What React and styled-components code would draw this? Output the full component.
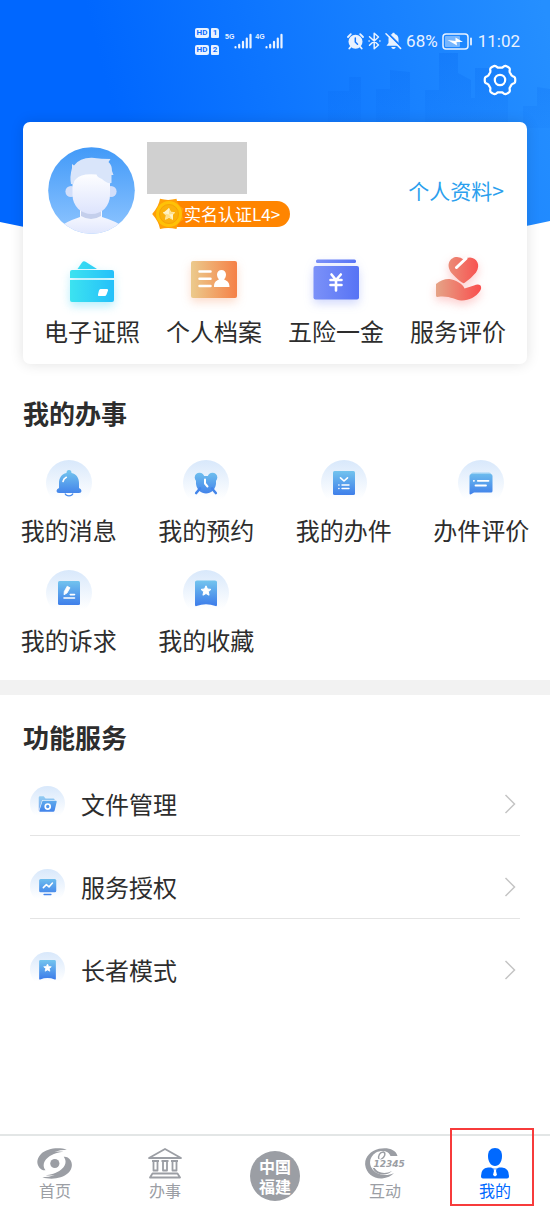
import React from "react";
import styled, { createGlobalStyle } from "styled-components";

const GlobalStyle = createGlobalStyle`
  *, *::before, *::after { box-sizing: border-box; }
  body {
    margin: 0;
    background: #fff;
    color: #2d2d2d;
    font-family: "Noto Sans CJK SC", "Noto Sans", sans-serif;
  }
  a { color: inherit; text-decoration: none; }
  button { border: 0; padding: 0; background: none; font: inherit; cursor: pointer; }
  svg { display: block; flex: none; }
`;

const Page = styled.div`
  display: flex;
  flex-direction: column;
  min-height: 100vh;
`;

/* ---------- header ---------- */

const Header = styled.header`
  position: relative;
`;

const Backdrop = styled.svg`
  position: absolute;
  inset: 0;
  width: 100%;
  height: 252px;
  z-index: -1;
`;

const StatusBar = styled.div`
  display: flex;
  align-items: center;
  height: 62px;
  padding: 20px 30px 0 195px;
  color: #e9f2ff;
`;

const SimStack = styled.div`
  display: grid;
  grid-template-columns: auto auto;
  gap: 7px 2px;
  margin-right: 6px;
`;

const Chip = styled.span`
  width: ${(p) => (p.$narrow ? "8px" : "14px")};
  height: 10px;
  border-radius: ${(p) => (p.$narrow ? "1px 3px 1px 1px" : "2px")};
  background: #e9f2ff;
  color: #0b6cff;
  font: 700 8px/10px Roboto, sans-serif;
  text-align: center;
`;

const Network = styled.span`
  display: flex;
  align-items: flex-start;
  margin-right: 3px;
  font: 700 7px/8px "Liberation Sans", sans-serif;
`;

const StatusRight = styled.div`
  display: flex;
  align-items: center;
  gap: 4px;
  margin-left: auto;
  font: 400 17px/22px Roboto, sans-serif;
`;

const Toolbar = styled.div`
  display: flex;
  justify-content: flex-end;
  padding: 0 32px 24px;
`;

const IconButton = styled.button`
  display: grid;
  place-items: center;
  width: 36px;
  height: 36px;
`;

/* ---------- profile card ---------- */

const Card = styled.section`
  margin: 0 23px;
  padding: 20px 8px 18px;
  border-radius: 7px;
  background: #fff;
  box-shadow: 0 0 14px rgba(0, 0, 0, 0.12);
`;

const Profile = styled.div`
  display: flex;
  align-items: center;
  height: 96px;
  padding: 0 15px 0 17px;
`;

const Info = styled.div`
  align-self: flex-start;
  margin-left: 12px;
`;

const HiddenName = styled.div`
  width: 100px;
  height: 52px;
  margin-bottom: 4px;
  background: #d0d0d0;
`;

const Verified = styled.a`
  display: flex;
  align-items: center;
  padding-left: 5px;
  color: #fff;
  svg { position: relative; }
`;

const Pill = styled.span`
  margin-left: -16px;
  padding: 0 10px 0 16px;
  border-radius: 0 13px 13px 0;
  background: #ff8500;
  font-size: 17px;
  line-height: 26px;
`;

const ProfileLink = styled.a`
  margin-left: auto;
  color: #2b9fee;
  font-size: 21px;
  line-height: 32px;
`;

const QuickGrid = styled.div`
  display: grid;
  grid-template-columns: repeat(4, 1fr);
  margin-top: 19px;
`;

const Tile = styled.a`
  display: flex;
  flex-direction: column;
  align-items: center;
  gap: ${(p) => p.$gap}px;
  font-size: 24px;
  line-height: 30px;
  white-space: nowrap;
`;

/* ---------- sections ---------- */

const Section = styled.section`
  padding-top: ${(p) => p.$top}px;
`;

const Title = styled.h2`
  margin: 0 23px;
  font-size: 26px;
  font-weight: 700;
  line-height: 28px;
`;

const TaskGrid = styled.div`
  display: grid;
  grid-template-columns: repeat(4, 1fr);
  row-gap: 25px;
  padding: 33px 0 25px;
`;

const Band = styled.div`
  height: 15px;
  background: #f2f2f2;
`;

const List = styled.ul`
  margin: 2px 30px 0;
  padding: 0;
  list-style: none;
`;

const Item = styled.li`
  border-bottom: 1px solid #e4e4e4;
  &:last-child { border-bottom: 0; }
`;

const ItemLink = styled.a`
  display: flex;
  align-items: center;
  gap: 16px;
  padding: 33px 4px 14px 0;
  font-size: 24px;
  line-height: 34px;
  svg:last-child { margin-left: auto; }
`;

/* ---------- tab bar ---------- */

const TabBar = styled.nav`
  display: grid;
  grid-template-columns: repeat(5, 1fr);
  height: 76px;
  margin-top: auto;
  border-top: 2px solid #e3e6e6;
`;

const Tab = styled.a`
  position: relative;
  display: flex;
  flex-direction: column;
  align-items: center;
  gap: 1px;
  padding-top: 12px;
  color: ${(p) => (p.$active ? "#0069ff" : "#9b9ea4")};
  font-size: 16px;
  line-height: 20px;
`;

const Seal = styled.span`
  height: 50px;
  width: 50px;
  margin-top: 3px;
  padding: 5px 9px;
  border-radius: 50%;
  background: #9b9ea4;
  color: #fff;
  font-size: 16px;
  font-weight: 700;
  line-height: 20px;
`;

const Frame = styled.span`
  position: absolute;
  inset: -8px 16px 4px 10px;
  border: 2px solid #f73b3b;
`;

/* ---------- drawings ---------- */

const polar = (cx, cy, r, deg) => {
  const a = (deg * Math.PI) / 180;
  return `${(cx + r * Math.cos(a)).toFixed(2)} ${(cy + r * Math.sin(a)).toFixed(2)}`;
};

const gearPath = (cx, cy, r, depth) => {
  const pts = [];
  for (let d = 0; d < 360; d += 3) {
    const wave = Math.tanh(2.2 * Math.cos((6 * d * Math.PI) / 180));
    pts.push(polar(cx, cy, r + depth * wave, d));
  }
  return `M${pts.join("L")}Z`;
};

const starPath = (cx, cy, r) => {
  const pts = [];
  for (let i = 0; i < 10; i++) pts.push(polar(cx, cy, i % 2 ? r * 0.48 : r, i * 36 - 90));
  return `M${pts.join("L")}Z`;
};

const Skyline = () => (
  <Backdrop viewBox="0 0 550 252" preserveAspectRatio="none" aria-hidden="true">
    <defs>
      <linearGradient id="sky" gradientUnits="userSpaceOnUse" x1="120" y1="140" x2="550" y2="30">
        <stop offset="0" stopColor="#0067ff" />
        <stop offset="1" stopColor="#258fff" />
      </linearGradient>
      <linearGradient id="city" gradientUnits="userSpaceOnUse" x1="0" y1="50" x2="0" y2="128">
        <stop offset="0" stopColor="#0668f0" stopOpacity=".3" />
        <stop offset="1" stopColor="#0668f0" stopOpacity=".08" />
      </linearGradient>
    </defs>
    <path d="M0 0H550V221Q275 282 0 222Z" fill="url(#sky)" />
    <path
      d="M328 128V91H349V77H361V128ZM376 128V89H390V70L410 72V128ZM425 128V90H439V53H458V73L471 80V98H475V68H508V128ZM523 128V106H537V87L550 89V128Z"
      fill="url(#city)"
    />
  </Backdrop>
);

const Signal = () => (
  <svg width="18" height="16" viewBox="0 0 18 16" stroke="currentColor" strokeWidth="2.2" strokeLinecap="round">
    <path d="M1.5 14.2v.2M5.200 14.4v-2.500M9 14.400v-5.500M12.800 14.400V5.500M16.500 14.400V1.800" />
  </svg>
);

const AlarmStatus = () => (
  <svg width="17" height="17" viewBox="0 0 17 17" fill="none" stroke="currentColor" strokeWidth="1.800" strokeLinecap="round">
    <circle cx="8.500" cy="8.700" r="7" fill="currentColor" stroke="none" />
    <path d="M1 4L3.800 1.200M16 4L13.200 1.200M3.500 14L2.300 15.500M13.500 14L14.700 15.500" />
    <path d="M8.300 5V9L10.500 11.300" stroke="#1678ff" strokeWidth="1.500" />
  </svg>
);

const Bluetooth = () => (
  <svg width="13" height="18" viewBox="0 0 13 18" fill="none" stroke="currentColor" strokeWidth="1.500" strokeLinejoin="round" strokeLinecap="round">
    <path d="M1.500 4.800L10.500 13L6.200 16.800V1.200L10.500 5L1.500 13.200" />
    <path d="M1 9h.2M11.800 9h.2" />
  </svg>
);

const BellOff = () => (
  <svg width="17" height="18" viewBox="0 0 17 18" fill="currentColor">
    <path d="M8.500 .8c.9 0 1.300.5 1.300 1.300 2.500.7 3.700 2.600 3.700 5V11l2 2.800H1.500L3.500 11V7c0-2.400 1.200-4.300 3.700-5 0-.7.400-1.200 1.300-1.200ZM6.300 15h4.400c-.3 2.600-4.100 2.600-4.400 0Z" />
    <path d="M2.500 1L17 15.500" stroke="#1a7dff" strokeWidth="2" />
    <path d="M1 1.800L15.600 16.400" stroke="currentColor" strokeWidth="1.500" strokeLinecap="round" />
  </svg>
);

const Battery = () => (
  <svg width="32" height="17" viewBox="0 0 32 17" fill="none">
    <rect x="1" y="1" width="25" height="15" rx="3" stroke="currentColor" strokeWidth="1.500" />
    <rect x="3" y="3" width="15" height="11" rx="1" fill="#fff" opacity=".4" />
    <path d="M5.500 7L13.500 8V4.500L21 9H14.500L15 12.500Z" fill="#fff" />
    <path d="M29 5.500v6" stroke="currentColor" strokeWidth="1.800" strokeLinecap="round" />
  </svg>
);

const Avatar = () => (
  <svg width="87" height="87" viewBox="0 0 87 87" role="img" aria-label="头像">
    <defs>
      <linearGradient id="avBg" x1="0" y1="0" x2="0" y2="1">
        <stop offset="0" stopColor="#429af8" />
        <stop offset="1" stopColor="#8fc5ff" />
      </linearGradient>
      <linearGradient id="avFace" x1="0" y1="0" x2="0" y2="1">
        <stop offset="0" stopColor="#fff" />
        <stop offset="1" stopColor="#dde4fd" />
      </linearGradient>
      <clipPath id="avClip"><circle cx="43.500" cy="43.500" r="43.300" /></clipPath>
    </defs>
    <g clipPath="url(#avClip)">
      <rect width="87" height="87" fill="url(#avBg)" />
      <path d="M10 81Q17 75 32 70V60H54V70Q68 74 77 81V90H10Z" fill="url(#avFace)" />
      <path d="M33 62H53V69Q43 75 33 69Z" fill="#c4cfec" />
      <circle cx="23" cy="44.500" r="5.600" fill="#d3dffa" />
      <circle cx="63" cy="44.500" r="5.600" fill="#d3dffa" />
      <path d="M24.500 30Q43 20 62 31V48C62 59 54 67 43.500 67S24.500 59 24.500 48Z" fill="url(#avFace)" />
      <path d="M23 37Q21.500 30 24 21L24 17L26 18.500Q32 10.500 44 10.800Q54 12 62.500 12L60.500 15Q64 18 64 24L65.500 28H63.500L63.500 36Q59 37 54 32Q49 30 48.500 27.500Q33 26 28 32Q25.500 34 25.500 37Z" fill="#d9e5fa" />
    </g>
  </svg>
);

const Medal = () => (
  <svg width="32" height="32" viewBox="0 0 32 32">
    <path d="M8 .8Q16 3 24.500 .8Q25 7 31.500 10.500Q29 16 31.500 21.500Q25 25 24.500 31Q16 29 8 31Q7 24 .2 16Q7 8 8 .8Z" fill="#ff9f08" />
    <circle cx="17" cy="16" r="13" fill="#ffc107" />
    <circle cx="17" cy="16" r="9.500" fill="#fbb00c" stroke="#f7a305" />
    <path d={starPath(17, 16.5, 6)} fill="#ffe08a" stroke="#ffe8a6" strokeLinejoin="round" />
    <path d="M17 10V16.500L11 15ZM17 16.500L21 22V16Z" fill="#fff3c8" />
  </svg>
);

const Glow = styled.svg`
  overflow: visible;
  filter: drop-shadow(0 4px 5px ${(p) => p.$tint});
`;

const Quick = ({ id, from, to, tint, children }) => (
  <Glow $tint={tint} width="48" height="48" viewBox="0 0 48 48" fill={`url(#${id})`} aria-hidden="true">
    <defs>
      <linearGradient id={id} gradientUnits="userSpaceOnUse" x1="2" y1="0" x2="46" y2="0">
        <stop offset="0" stopColor={from} />
        <stop offset="1" stopColor={to} />
      </linearGradient>
    </defs>
    {children}
  </Glow>
);

const Wallet = () => (
  <Quick id="qWallet" from="#3ce3f0" to="#25c0fa" tint="rgba(44,205,246,.35)">
    <path d="M9.500 12L14 5.500Q15.500 3.500 18 5L29 12Z" />
    <path d="M2 21V15Q2 13 4 13H44Q46 13 46 15V21ZM2 23H46V43Q46 45 44 45H4Q2 45 2 43Z" />
    <path d="M32.500 32H39Q40.500 32 40 33.500L38.500 37.500Q38 39 36.500 39H31Q29.500 39 30 37.500L31 33.500Q31.500 32 32.500 32Z" fill="#fff" />
  </Quick>
);

const IdCard = () => (
  <Quick id="qId" from="#ecc98b" to="#f58248" tint="rgba(245,130,72,.28)">
    <rect x="1" y="4" width="46" height="37" rx="2" />
    <path d="M9.500 14.500H20.500M9.500 21.800H20.500M9.500 29H20.500" stroke="#fff" strokeWidth="2.500" strokeLinecap="round" />
    <path d="M31.500 13C34 13 36 15 36 17.500 36 19.500 35 21.500 34 22.500 37.500 24 39.500 25.500 39.500 30H24C24 25.500 25.500 24 29 22.500 28 21.500 27 19.500 27 17.500 27 15 29 13 31.500 13Z" fill="#fff" />
  </Quick>
);

const Money = () => (
  <Quick id="qMoney" from="#7b91f8" to="#5874f5" tint="rgba(88,116,245,.28)">
    <rect x="4" y="2.500" width="40" height="3.500" rx="1.500" />
    <rect x="1.500" y="9" width="45.500" height="33.500" rx="2" />
    <path d="M19.500 17.500L24 23L28.800 17.500M24 23V33.500M18.500 23H29.500M18.500 28H29.500" stroke="#fff" strokeWidth="2.600" strokeLinecap="round" strokeLinejoin="round" fill="none" />
  </Quick>
);

const HeartHand = () => (
  <Quick id="qHeart" from="#e5a487" to="#f9504f" tint="rgba(249,80,79,.28)">
    <path d="M29 26Q26 25 18 16.500C11 8 16 0 23 0Q27 0 29.500 2.500 32 .5 36 .5C43 1 47 8 42 15.500Q37 21.500 31 25.500Q30 26.500 29 26Z" />
    <path d="M22.500 10.500L32 1.500" stroke="#fff" strokeWidth="3" strokeLinecap="round" />
    <path d="M2 27Q9 21.500 15.500 22C22 23 29 27 30.500 31.500L40 28.500Q44 26.500 46.500 28.500Q48 31 46 34C42 40 34 44 27 43.500C21 43 15 38 3.500 40Q2 40 2 38.500Z" />
  </Quick>
);

const Badge = ({ id, size = 46, children }) => (
  <svg width={size} height={size} viewBox="0 0 46 46" fill={`url(#${id})`} aria-hidden="true">
    <defs>
      <linearGradient id={`${id}Bg`} x1="0" y1="0" x2="0" y2="1">
        <stop offset="0" stopColor="#d8e8fb" />
        <stop offset=".85" stopColor="#fff" />
      </linearGradient>
      <linearGradient id={id} gradientUnits="userSpaceOnUse" x1="0" y1="11" x2="0" y2="35">
        <stop offset="0" stopColor="#72c3ee" />
        <stop offset="1" stopColor="#3f7fea" />
      </linearGradient>
    </defs>
    <circle cx="23" cy="23" r="23" fill={`url(#${id}Bg)`} />
    {children}
  </svg>
);

const white = { fill: "none", stroke: "#fff", strokeWidth: 1.6, strokeLinecap: "round", strokeLinejoin: "round" };

const Bell = () => (
  <Badge id="bBell">
    <path d="M23 10Q25.500 10 25.500 13C30.500 14 33 18 33 23V28Q35.500 29 35.500 31Q35.500 33 33 33H13Q10.500 33 10.500 31Q10.500 29 13 28V23C13 18 15.500 14 20.500 13Q20.500 10 23 10Z" />
    <path d="M19 33.500Q20 35.800 23 35.800T27 33.500" fill="none" stroke="#4a8cec" strokeWidth="1.200" />
    <path d="M17 21.500Q17.500 18.500 20.300 17.300" {...white} />
  </Badge>
);

const Alarm = () => (
  <Badge id="bAlarm">
    <circle cx="16.500" cy="17.500" r="4.800" />
    <circle cx="29.500" cy="17.500" r="4.800" />
    <path d="M14 16H32Q33.500 20 33 24C32 30 28 33.500 23 33.500S14 30 13 24Q12.500 20 14 16Z" />
    <path d="M13.200 33L17 28.500M32.800 33L29 28.500" stroke="#4385ea" strokeWidth="2.600" strokeLinecap="round" />
    <path d="M22 19.500V23.500L24.500 26.500" {...white} strokeWidth="2" />
  </Badge>
);

const DocCheck = () => (
  <Badge id="bDoc">
    <rect x="12" y="11" width="22" height="24" rx="1.500" />
    <path d="M19.500 17.800L23 21L26.500 17.800" {...white} />
    <path d="M17.800 25h.2M21 25H28M17.800 28.500h.2M21 28.500H28" {...white} strokeWidth="1.400" />
  </Badge>
);

const Comment = () => (
  <Badge id="bCom">
    <path d="M13 14Q13 12.500 15 12.500H31Q33 12.500 33 14V18H13Z" opacity=".6" />
    <path d="M11.500 16Q11.500 14 13.500 14H32.500Q34.500 14 34.500 16V31Q34.500 32.500 33 32.500H16L12.500 34.500Q11.500 34.500 11.500 33.500Z" />
    <path d="M15.800 20.800h.2M19.800 20.800H30.500M17.500 25.500H28" {...white} strokeWidth="1.800" />
  </Badge>
);

const DocPen = () => (
  <Badge id="bPen">
    <rect x="12" y="11" width="22" height="24" rx="1.500" />
    <path d="M18 24.800L18.300 21.500L21.200 16.200L24 17.800L21 23Z" fill="#fff" stroke="#fff" strokeWidth=".8" strokeLinejoin="round" />
    <path d="M24.300 24.600H28.500M18 28H28.500" {...white} />
  </Badge>
);

const Bookmark = ({ id, size }) => (
  <Badge id={id} size={size}>
    <path d="M12 12Q12 10.500 14 10.500H32Q34 10.500 34 12V35Q34 36.500 32.500 36Q23 32.500 13.500 36Q12 36.500 12 35Z" />
    <path d={starPath(23, 21, 5.2)} fill="#fff" stroke="#fff" strokeLinejoin="round" />
  </Badge>
);

const Folder = () => (
  <Badge id="bFolder" size={35}>
    <path d="M11.500 33V15Q11.500 13.500 13 13.500H18L20.500 16.500H31Q32.500 16.500 32.500 18.500H16Z" opacity=".7" />
    <path d="M16.500 19.500H34Q35.500 19.500 35 21L32.500 32Q32 34 30.500 34H13Q12 34 12.300 32.500Z" />
    <circle cx="23.300" cy="27" r="3.300" {...white} strokeWidth="2.200" />
  </Badge>
);

const Monitor = () => (
  <Badge id="bMon" size={35}>
    <rect x="12" y="13" width="22.500" height="17.500" rx="2" />
    <path d="M18.500 33.500H27.500" stroke="#4385ea" strokeWidth="1.800" strokeLinecap="round" />
    <path d="M17.500 24.500L21.500 20.500L25 23.500L29.500 18.500" {...white} strokeWidth="2" />
  </Badge>
);

const Chevron = () => (
  <svg width="12" height="20" viewBox="0 0 12 20" fill="none" stroke="#c4c4c4" strokeWidth="1.500" aria-hidden="true">
    <path d="M1.500 1L10.500 10L1.500 19" />
  </svg>
);

const swirl = "M29.800 1.800C22-1 10 .2 4 6C-1 11-1 18 4.500 21.500Q6.500 22.600 8.500 22.300C5.500 18.500 6 13.500 11 9.500C16 5.500 22 4.200 26.500 3.800Q21 3.200 17.500 4Q23 1.800 29.800 1.800Z";

const HomeIcon = () => (
  <svg width="36" height="31" viewBox="0 0 36 31" fill="currentColor" aria-hidden="true">
    <path d={swirl} />
    <path d={swirl} transform="rotate(180 17.6 15.5)" />
    <circle cx="17.800" cy="15.500" r="4.600" />
  </svg>
);

const Temple = () => (
  <svg width="34" height="31" viewBox="0 0 34 31" fill="none" stroke="currentColor" strokeWidth="1.800" strokeLinejoin="round" aria-hidden="true">
    <path d="M1 10L17 1L33 10ZM4 13H11M5.500 13V22.500H9.500V13M13.500 13H20.500M15 13V22.500H19V13M23 13H30M24.500 13V22.500H28.500V13M4.500 25.500H29.500L32 29.500H2Z" />
  </svg>
);

const Hotline = () => (
  <svg width="40" height="31" viewBox="0 0 40 31" fill="currentColor" aria-hidden="true">
    <path d="M32.500 8C31 1 22-1 14 .8C5 3-.5 9.500 .2 17C1 25 8.500 31 17 30.500C22 30 26.500 28 29 25C22 28.500 13 27.500 8 22C3 16 4.500 8.500 11 4.500C17 1.500 24 3 25.500 8Z" />
    <path d="M9.500 19.500C12 25 20 26.500 27 23C21 29 10 27 7.500 19.500Z" />
    <path d="M14 11.500C12.500 8 15 3.800 18.500 4C21 5 20 9.500 15.500 11.800" fill="none" stroke="currentColor" strokeWidth="1.400" />
    <text x="8.500" y="18.800" fontFamily="DejaVu Sans, sans-serif" fontSize="9" fontWeight="700" fontStyle="italic" stroke="#fff" strokeWidth="2" paintOrder="stroke">12345</text>
  </svg>
);

const Person = () => (
  <svg width="30" height="31" viewBox="0 0 30 31" fill="currentColor" aria-hidden="true">
    <path d="M15 0C19.500 0 22 3 22 8C22 14 19 18 15 18S8 14 8 8C8 3 10.500 0 15 0Z" />
    <path d="M8 19.500H11Q15 22 19 19.500H22Q29 20 29 28V28.500Q29 30.500 27 30.500H3Q1 30.500 1 28.500V28Q1 20 8 19.500Z" />
    <path d="M13.500 21.200H16.500L16 23L17 27L15 28.500L13 27L14 23Z" fill="#fff" />
  </svg>
);

/* ---------- data ---------- */

const quickLinks = [
  ["电子证照", <Wallet />],
  ["个人档案", <IdCard />],
  ["五险一金", <Money />],
  ["服务评价", <HeartHand />],
];

const tasks = [
  ["我的消息", <Bell />],
  ["我的预约", <Alarm />],
  ["我的办件", <DocCheck />],
  ["办件评价", <Comment />],
  ["我的诉求", <DocPen />],
  ["我的收藏", <Bookmark id="bMark" />],
];

const services = [
  ["文件管理", <Folder />],
  ["服务授权", <Monitor />],
  ["长者模式", <Bookmark id="bElder" size={35} />],
];

export default function App() {
  return (
    <Page>
      <GlobalStyle />
      <Header>
        <Skyline />
        <StatusBar>
          <SimStack>
            <Chip>HD</Chip>
            <Chip $narrow>1</Chip>
            <Chip>HD</Chip>
            <Chip $narrow>2</Chip>
          </SimStack>
          <Network>5G<Signal /></Network>
          <Network>4G<Signal /></Network>
          <StatusRight>
            <AlarmStatus />
            <Bluetooth />
            <BellOff />
            <span>68%</span>
            <Battery />
            <span>11:02</span>
          </StatusRight>
        </StatusBar>
        <Toolbar>
          <IconButton type="button" aria-label="设置">
            <svg width="34" height="34" viewBox="0 0 34 34" fill="none" stroke="#fff" strokeWidth="2.200" strokeLinejoin="round">
              <path d={gearPath(17, 17, 13.8, 1.5)} />
              <circle cx="17" cy="17" r="5.200" />
            </svg>
          </IconButton>
        </Toolbar>
        <Card>
          <Profile>
            <Avatar />
            <Info>
              <HiddenName />
              <Verified href="#verify">
                <Medal />
                <Pill>实名认证L4&gt;</Pill>
              </Verified>
            </Info>
            <ProfileLink href="#profile">个人资料&gt;</ProfileLink>
          </Profile>
          <QuickGrid>
            {quickLinks.map(([label, icon]) => (
              <Tile key={label} href="#quick" $gap={11}>{icon}{label}</Tile>
            ))}
          </QuickGrid>
        </Card>
      </Header>

      <Section $top={35}>
        <Title>我的办事</Title>
        <TaskGrid>
          {tasks.map(([label, icon]) => (
            <Tile key={label} href="#task" $gap={9}>{icon}{label}</Tile>
          ))}
        </TaskGrid>
      </Section>
      <Band />
      <Section $top={28}>
        <Title>功能服务</Title>
        <List>
          {services.map(([label, icon]) => (
            <Item key={label}>
              <ItemLink href="#service">{icon}{label}<Chevron /></ItemLink>
            </Item>
          ))}
        </List>
      </Section>

      <TabBar>
        <Tab href="#home"><HomeIcon />首页</Tab>
        <Tab href="#affairs"><Temple />办事</Tab>
        <Tab href="#fujian"><Seal>中国福建</Seal></Tab>
        <Tab href="#interact"><Hotline />互动</Tab>
        <Tab href="#mine" $active aria-current="page">
          <Person />我的
          <Frame />
        </Tab>
      </TabBar>
    </Page>
  );
}
